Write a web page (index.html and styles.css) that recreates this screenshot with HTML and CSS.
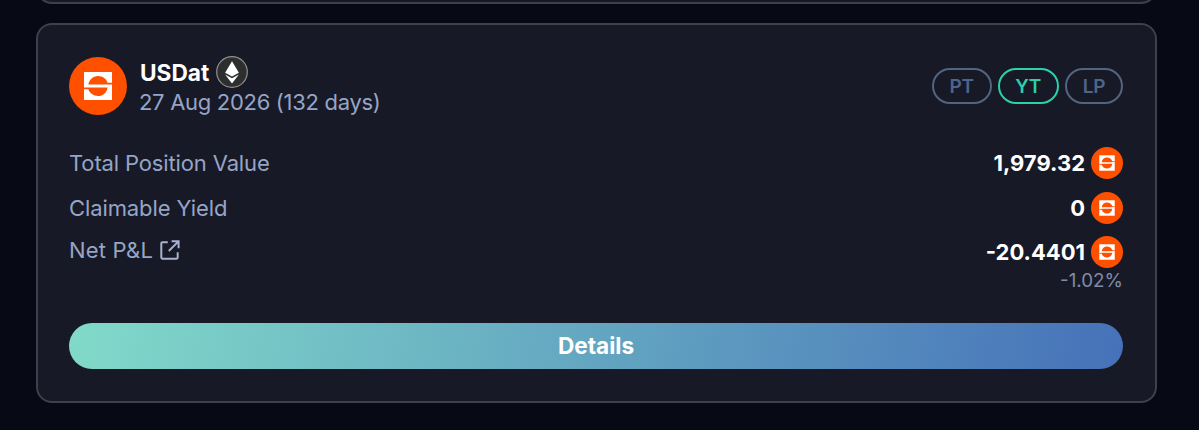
FILE: index.html
```html
<!DOCTYPE html>
<html lang="en">
<head>
<meta charset="utf-8">
<title>Positions</title>
<link rel="stylesheet" href="styles.css">
</head>
<body>
<svg class="defs" width="0" height="0">
  <symbol id="token" viewBox="0 0 58 58">
    <circle cx="29" cy="29" r="29" fill="#ff5000"/>
    <path fill="#fff" d="M15 15H43V43H15Z"/>
    <path fill="#ff5000" d="M19.4 27.6C20.1 22.6 24 19 29 19C33.6 19 37.4 21.8 38.6 25.7H43V27.4L36 27.6ZM38.6 30.4C37.9 35.4 34 39 29 39C24.4 39 20.6 36.2 19.4 32.3H15V30.6L22 30.4Z"/>
  </symbol>
</svg>
<main class="page">
  <section class="card card-previous"></section>
  <section class="card card-position">
    <header class="header">
      <svg class="asset-icon"><use href="#token"/></svg>
      <div class="asset">
        <div class="asset-title">
          <span class="asset-name">USDat</span>
          <svg class="chain" viewBox="0 0 32 32">
            <circle cx="16" cy="16" r="15.3" fill="#2d2e2e" stroke="#92918f" stroke-width="1.2"/>
            <path fill="#fff" d="M16 5.2L22.9 16.8L16 20.6L9.1 16.8ZM9.1 18.4L16 22.2L22.9 18.4L16 27.4Z"/>
          </svg>
        </div>
        <div class="maturity">27 Aug 2026 (132 days)</div>
      </div>
      <div class="tags">
        <span class="tag tag-pt">PT</span>
        <span class="tag tag-yt">YT</span>
        <span class="tag tag-lp">LP</span>
      </div>
    </header>
    <div class="rows">
      <div class="row"><span class="label label-total">Total Position Value</span><span class="value"><b>1,979.32</b><svg class="coin"><use href="#token"/></svg></span></div>
      <div class="row"><span class="label label-yield">Claimable Yield</span><span class="value"><b>0</b><svg class="coin"><use href="#token"/></svg></span></div>
      <div class="row"><span class="label label-pnl">Net P&amp;L<svg class="external" viewBox="0 0 20 20"><path d="M7.8 2.2H2.4Q1.3 2.2 1.3 3.3V17.6Q1.3 18.7 2.4 18.7H16.6Q17.7 18.7 17.7 17.6V12.2M11.6 1.2H18.6V8.2M18.2 1.6L8.8 11"/></svg></span><span class="value"><b>-20.4401</b><svg class="coin"><use href="#token"/></svg></span></div>
    </div>
    <div class="percent">-1.02%</div>
    <button class="details">Details</button>
  </section>
</main>
</body>
</html>
```
FILE: styles.css
```css
* { box-sizing: border-box; }
body {
  margin: 0;
  background: #070915;
  font-family: Inter, "Liberation Sans", sans-serif;
  color: #fff;
}
.defs { display: block; height: 0; }
svg { display: block; flex: none; }
.page { height: 430px; padding: 0 42px 0 36px; overflow: hidden; }
.card { background: #181926; border: 2px solid #3e404b; border-radius: 16px; }
.card-previous { height: 40px; margin-top: -36px; }
.card-position { height: 380px; margin-top: 19px; padding: 32px 32px 0 31px; }
.header { display: flex; height: 60px; }
.asset-icon { width: 58px; height: 58px; }
.asset { margin-left: 12px; }
.asset-title { display: flex; align-items: center; gap: 7px; height: 32px; margin-top: -1px; padding-left: 1px; }
.asset-name { font-size: 22.7px; font-weight: 700; line-height: 32px; padding-top: 1px; }
.chain { width: 32px; height: 32px; }
.maturity { font-size: 22px; letter-spacing: -0.3px; line-height: 28px; color: #96a5c5; white-space: nowrap; }
.tags { display: flex; gap: 6.5px; margin: 11px 0 0 auto; height: 36px; }
.tag {
  display: flex; align-items: center; justify-content: center;
  height: 36px; border: 2px solid #53647f; border-radius: 18px;
  color: #50648a; font-size: 19px; font-weight: 600; letter-spacing: -0.2px;
}
.tag-pt { width: 59.5px; }
.tag-yt { width: 60.5px; border-color: #2bd0ac; color: #2bd0ac; }
.tag-lp { width: 58px; }
.rows { margin-top: 30px; display: flex; flex-direction: column; gap: 12.5px; }
.row { display: flex; justify-content: space-between; align-items: center; height: 32px; }
.label { display: flex; align-items: center; color: #96a5c5; font-size: 22px; line-height: 32px; }
.label-total { letter-spacing: -0.14px; }
.label-yield { letter-spacing: -0.1px; }
.label-pnl { margin-top: -4px; letter-spacing: 0.2px; }
.external { width: 20px; height: 20px; margin-left: 7px; fill: none; stroke: #a5b3d1; stroke-width: 2; }
.value { display: flex; align-items: center; gap: 6px; font-size: 22px; line-height: 32px; }
.value b { font-weight: 700; }
.coin { width: 32px; height: 32px; }
.percent { padding-top: 1px; text-align: right; font-size: 18.8px; line-height: 24px; color: #818ca8; }
.details {
  display: block; width: 100%; height: 46px; margin-top: 30px; padding: 0;
  border: 0; border-radius: 24px;
  background: linear-gradient(100deg, #81dac9 0%, #4671b9 100%);
  color: #fff; font: 700 22.6px/46px Inter, sans-serif;
}
```
